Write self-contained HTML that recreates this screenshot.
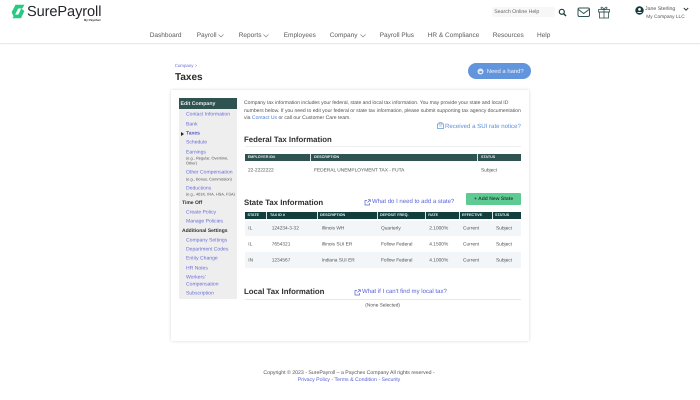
<!DOCTYPE html>
<html><head><meta charset="utf-8"><style>
html,body{margin:0;padding:0;background:#fff}
body{width:700px;height:400px;position:relative;overflow:hidden;font-family:"Liberation Sans",sans-serif;color:#4a4a4a;text-rendering:geometricPrecision}
.a{position:absolute;white-space:nowrap}
.nav{top:31.400px;font-size:6.500px;line-height:10px;color:#5a5a5a}
.s{left:186px;font-size:5.050px;line-height:7px;color:#6a70d8;transform:translateY(.6px)}
.sub{left:186px;font-size:3.900px;line-height:5.500px;color:#555;transform:translateY(.6px)}
.h{font-size:7.800px;line-height:11px;font-weight:bold;color:#2f2f2f}
.bar{background:#2f5350;height:7px}
.th{font-size:3.700px;line-height:7px;font-weight:bold;color:#e8eeee;height:7px}
.td{font-size:4.800px;line-height:7px;color:#555;transform:translateY(.7px)}
.row{left:245px;width:276px;background:#f3f6f8;height:15.500px}
.div{background:#dfe3e3;width:.5px;height:7px}
</style></head><body>
<div class="a" style="left:0;top:0;width:700px;height:43px;background:#fff;box-shadow:0 1px 1px #e3e3e3"></div>
<svg class="a" style="left:11px;top:4px" width="14" height="15" viewBox="0 0 14 15"><path d="M4.500.8H13.500L11.300 4.500H7.200L4.200 10.500 2.800 12.800 .6 8.300z" fill="#27c983"/><path d="M10.200 4.500 13.400 7 10 14.200H1.500L3.500 10.600H7.300z" fill="#27c983"/></svg>
<div class="a" style="left:27px;top:2.500px;font-size:14.600px;line-height:18px;color:#23262b;letter-spacing:-.1px">SurePayroll</div>
<div class="a" style="left:84px;top:17.500px;font-size:3px;line-height:4px;font-weight:bold;color:#333">By Paychex</div>

<div class="a nav" style="left:149.700px">Dashboard</div>
<div class="a nav" style="left:196.700px">Payroll</div>
<svg class="a" style="left:218px;top:34px" width="6" height="4"><path d="M.5.500 3 3 5.500.5" fill="none" stroke="#777" stroke-width=".6"/></svg>
<div class="a nav" style="left:238.700px">Reports</div>
<svg class="a" style="left:263px;top:34px" width="6" height="4"><path d="M.5.500 3 3 5.500.5" fill="none" stroke="#777" stroke-width=".6"/></svg>
<div class="a nav" style="left:283.700px">Employees</div>
<div class="a nav" style="left:329.700px">Company</div>
<svg class="a" style="left:360px;top:34px" width="6" height="4"><path d="M.5.500 3 3 5.500.5" fill="none" stroke="#777" stroke-width=".6"/></svg>
<div class="a nav" style="left:379.700px">Payroll Plus</div>
<div class="a nav" style="left:427.700px">HR &amp; Compliance</div>
<div class="a nav" style="left:492.700px">Resources</div>
<div class="a nav" style="left:537px">Help</div>

<div class="a" style="left:491.500px;top:6.500px;width:63.500px;height:10.500px;background:#f7f7f7;border-radius:2px"></div>
<div class="a" style="left:494.300px;top:8.500px;font-size:5.200px;line-height:7px;color:#666">Search Online Help</div>
<svg class="a" style="left:557.500px;top:8px" width="9" height="9" viewBox="0 0 9 9"><circle cx="3.800" cy="3.800" r="2.500" fill="none" stroke="#1e3d3c" stroke-width="1.200"/><path d="M5.600 5.600 8 8" stroke="#1e3d3c" stroke-width="1.500"/></svg>
<svg class="a" style="left:577px;top:7px" width="13" height="11" viewBox="0 0 13 11"><rect x="1" y="1" width="11.500" height="8.500" rx="1.500" fill="none" stroke="#2f5350" stroke-width="1"/><path d="M1.400 2.500 6.700 6.500 12 2.500" fill="none" stroke="#2f5350" stroke-width="1"/></svg>
<svg class="a" style="left:598px;top:6px" width="12" height="13" viewBox="0 0 12 13"><rect x=".5" y="3.500" width="11" height="2.500" fill="none" stroke="#2f5350" stroke-width=".8"/><rect x="1.500" y="6" width="9" height="6" fill="none" stroke="#2f5350" stroke-width=".8"/><path d="M6 3.500V12M6 3.500C4 3.500 3 2.500 3 1.700S4.500.5 6 3.500C7.500.5 9 .9 9 1.700S8 3.500 6 3.500" fill="none" stroke="#2f5350" stroke-width=".8"/></svg>
<svg class="a" style="left:634.500px;top:6.200px" width="9" height="9" viewBox="0 0 9 9"><circle cx="4.500" cy="4.500" r="4.200" fill="#173b3c"/><circle cx="4.500" cy="3.400" r="1.400" fill="#fff"/><path d="M2 7c.6-1.300 4.400-1.300 5 0" fill="#fff"/></svg>
<div class="a" style="left:645px;top:6.200px;font-size:5.200px;line-height:7px;color:#555">Jane Sterling</div>
<svg class="a" style="left:683px;top:7px" width="6" height="5"><path d="M.8 1 3 3.200 5.200 1" fill="none" stroke="#1e3d3c" stroke-width="1"/></svg>
<div class="a" style="left:646.300px;top:13.500px;font-size:4.800px;line-height:7px;color:#555">My Company LLC</div>

<div class="a" style="left:174.700px;top:63.300px;font-size:4.400px;line-height:6px;color:#6a70d8">Company &gt;</div>
<div class="a" style="left:175px;top:71px;font-size:10px;line-height:13px;font-weight:bold;color:#2b2b2b">Taxes</div>
<div class="a" style="left:468.300px;top:63.300px;width:63px;height:15.500px;border-radius:8px;background:#6395dc"></div>
<svg class="a" style="left:476.500px;top:67.500px" width="7" height="7" viewBox="0 0 7 7"><circle cx="3.500" cy="3.500" r="3" fill="#dfe8f6"/><path d="M2.500 5V3.200h2.300V5z" fill="#6395dc"/></svg>
<div class="a" style="left:486.700px;top:67.500px;font-size:5.900px;line-height:8px;color:#eef3fb">Need a hand?</div>

<div class="a" style="left:171px;top:90px;width:358px;height:251px;background:#fff;box-shadow:0 0 3px #d6d6d6"></div>
<div class="a" style="left:179px;top:98.300px;width:57.700px;height:200.500px;background:#eeeeee"></div>
<div class="a" style="left:179px;top:98.300px;width:57.700px;height:10.700px;background:#2f5350"></div>
<div class="a" style="left:180.500px;top:100.500px;font-size:5.200px;line-height:7px;font-weight:bold;color:#e8eeee">Edit Company</div>

<div class="a s" style="top:111.300px">Contact Information</div>
<div class="a s" style="top:120.500px">Bank</div>
<div class="a" style="left:181px;top:132px;width:0;height:0;border-left:3px solid #222;border-top:2px solid transparent;border-bottom:2px solid transparent"></div>
<div class="a s" style="top:130px;font-weight:bold;color:#4f56d0">Taxes</div>
<div class="a s" style="top:139.300px">Schedule</div>
<div class="a s" style="top:148.700px">Earnings</div>
<div class="a sub" style="top:155.300px">(e.g., Regular, Overtime,</div>
<div class="a sub" style="top:160px">Other)</div>
<div class="a s" style="top:169.300px">Other Compensation</div>
<div class="a sub" style="top:176px">(e.g., Bonus, Commission)</div>
<div class="a s" style="top:185px">Deductions</div>
<div class="a sub" style="top:191px">(e.g., 401K, IRA, HSA, FSA)</div>
<div class="a" style="left:182px;top:200px;font-size:5px;line-height:7px;font-weight:bold;color:#333">Time Off</div>
<div class="a s" style="top:209px">Create Policy</div>
<div class="a s" style="top:218.300px">Manage Policies</div>
<div class="a" style="left:182px;top:227.700px;font-size:5px;line-height:7px;font-weight:bold;color:#333">Additional Settings</div>
<div class="a s" style="top:236.700px">Company Settings</div>
<div class="a s" style="top:246px">Department Codes</div>
<div class="a s" style="top:255.300px">Entity Change</div>
<div class="a s" style="top:264.600px">HR Notes</div>
<div class="a s" style="top:274px">Workers'</div>
<div class="a s" style="top:280.700px">Compensation</div>
<div class="a s" style="top:290px">Subscription</div>

<div class="a" style="left:244px;top:98.500px;font-size:5.080px;line-height:8px;color:#555;letter-spacing:-.025px">Company tax information includes your federal, state and local tax information. You may provide your state and local ID</div>
<div class="a" style="left:244px;top:106.500px;font-size:5.080px;line-height:8px;color:#555;letter-spacing:-.015px">numbers below. If you need to edit your federal or state tax information, please submit supporting tax agency documentation</div>
<div class="a" style="left:244px;top:113.800px;font-size:5.080px;line-height:8px;color:#555">via <span style="color:#4f7fd0">Contact Us</span> or call our Customer Care team.</div>

<svg class="a" style="left:437px;top:122px" width="7" height="7" viewBox="0 0 7 7"><rect x=".5" y="2" width="6" height="4.500" fill="none" stroke="#5a8fd8" stroke-width=".7"/><path d="M2 2V.7h3V2M2 4h3" stroke="#5a8fd8" stroke-width=".6" fill="none"/></svg>
<div class="a" style="left:445px;top:121.500px;font-size:6.100px;line-height:9px;color:#5a8fd8">Received a SUI rate notice?</div>

<div class="a h" style="left:244px;top:133.500px">Federal Tax Information</div>
<div class="a" style="left:245px;top:146px;width:276px;height:.5px;background:#eee"></div>
<div class="a bar" style="left:245px;top:154.300px;width:276px"></div>
<div class="a th" style="left:247.700px;top:154.300px">EMPLOYER ID#</div>
<div class="a div" style="left:310px;top:154.300px"></div>
<div class="a th" style="left:314px;top:154.300px">DESCRIPTION</div>
<div class="a div" style="left:477.300px;top:154.300px"></div>
<div class="a th" style="left:481px;top:154.300px">STATUS</div>
<div class="a td" style="left:248px;top:167px">22-2222222</div>
<div class="a td" style="left:314px;top:167px">FEDERAL UNEMPLOYMENT TAX - FUTA</div>
<div class="a td" style="left:481px;top:167px">Subject</div>

<div class="a h" style="left:244px;top:196.800px">State Tax Information</div>
<svg class="a" style="left:364px;top:199px" width="7" height="7" viewBox="0 0 7 7"><path d="M3 1.500H1V6h4.500V4M3.500 3.500 6.200.8M4 .7h2.300V3" fill="none" stroke="#5a63d8" stroke-width=".7"/></svg>
<div class="a" style="left:372px;top:197.500px;font-size:6.020px;line-height:9px;color:#5a63d8">What do I need to add a state?</div>
<div class="a" style="left:466px;top:193.300px;width:55.300px;height:12px;background:#5ecb92;border-radius:1px"></div>
<div class="a" style="left:474px;top:195.800px;font-size:5px;line-height:7px;font-weight:bold;color:#234a42">+ Add New State</div>

<div class="a" style="left:245px;top:212.300px;width:276px;height:7px;background:#123f3e"></div>
<div class="a th" style="left:247.500px;top:212.300px">STATE</div>
<div class="a div" style="left:266px;top:212.300px"></div>
<div class="a th" style="left:270px;top:212.300px">TAX ID #</div>
<div class="a div" style="left:317.300px;top:212.300px"></div>
<div class="a th" style="left:320px;top:212.300px">DESCRIPTION</div>
<div class="a div" style="left:377px;top:212.300px"></div>
<div class="a th" style="left:380px;top:212.300px">DEPOSIT FREQ.</div>
<div class="a div" style="left:425.300px;top:212.300px"></div>
<div class="a th" style="left:428.300px;top:212.300px">RATE</div>
<div class="a div" style="left:458.700px;top:212.300px"></div>
<div class="a th" style="left:462px;top:212.300px">EFFECTIVE</div>
<div class="a div" style="left:491.700px;top:212.300px"></div>
<div class="a th" style="left:495px;top:212.300px">STATUS</div>

<div class="a row" style="top:220.500px"></div>
<div class="a td" style="left:248.300px;top:225px">IL</div>
<div class="a td" style="left:271.700px;top:225px">124234-3-32</div>
<div class="a td" style="left:321.700px;top:225px">Illinois WH</div>
<div class="a td" style="left:381px;top:225px">Quarterly</div>
<div class="a td" style="left:429.300px;top:225px">2.1000%</div>
<div class="a td" style="left:463px;top:225px">Current</div>
<div class="a td" style="left:496px;top:225px">Subject</div>

<div class="a td" style="left:248.300px;top:240.700px">IL</div>
<div class="a td" style="left:271.700px;top:240.700px">7654321</div>
<div class="a td" style="left:321.700px;top:240.700px">Illinois SUI ER</div>
<div class="a td" style="left:381px;top:240.700px">Follow Federal</div>
<div class="a td" style="left:429.300px;top:240.700px">4.1500%</div>
<div class="a td" style="left:463px;top:240.700px">Current</div>
<div class="a td" style="left:496px;top:240.700px">Subject</div>

<div class="a row" style="top:252.300px"></div>
<div class="a td" style="left:248.300px;top:257px">IN</div>
<div class="a td" style="left:271.700px;top:257px">1234567</div>
<div class="a td" style="left:321.700px;top:257px">Indiana SUI ER</div>
<div class="a td" style="left:381px;top:257px">Follow Federal</div>
<div class="a td" style="left:429.300px;top:257px">4.1000%</div>
<div class="a td" style="left:463px;top:257px">Current</div>
<div class="a td" style="left:496px;top:257px">Subject</div>

<div class="a h" style="left:244px;top:285.800px">Local Tax Information</div>
<svg class="a" style="left:354px;top:289px" width="7" height="7" viewBox="0 0 7 7"><path d="M3 1.500H1V6h4.500V4M3.500 3.500 6.200.8M4 .7h2.300V3" fill="none" stroke="#5a63d8" stroke-width=".7"/></svg>
<div class="a" style="left:362px;top:287.500px;font-size:6.050px;line-height:9px;color:#5a63d8">What if I can't find my local tax?</div>
<div class="a" style="left:245px;top:299.300px;width:276px;height:.5px;background:#e8e8e8"></div>
<div class="a td" style="left:365.300px;top:301.500px">(None Selected)</div>

<div class="a" style="left:0;width:698px;top:368.700px;text-align:center;font-size:5.200px;line-height:8px;color:#555">Copyright © 2023 - SurePayroll – a Paychex Company All rights reserved -</div>
<div class="a" style="left:0;width:698px;top:376px;text-align:center;font-size:5.200px;line-height:8px;color:#5a63d8">Privacy Policy - Terms &amp; Condition - Security</div>
</body></html>
